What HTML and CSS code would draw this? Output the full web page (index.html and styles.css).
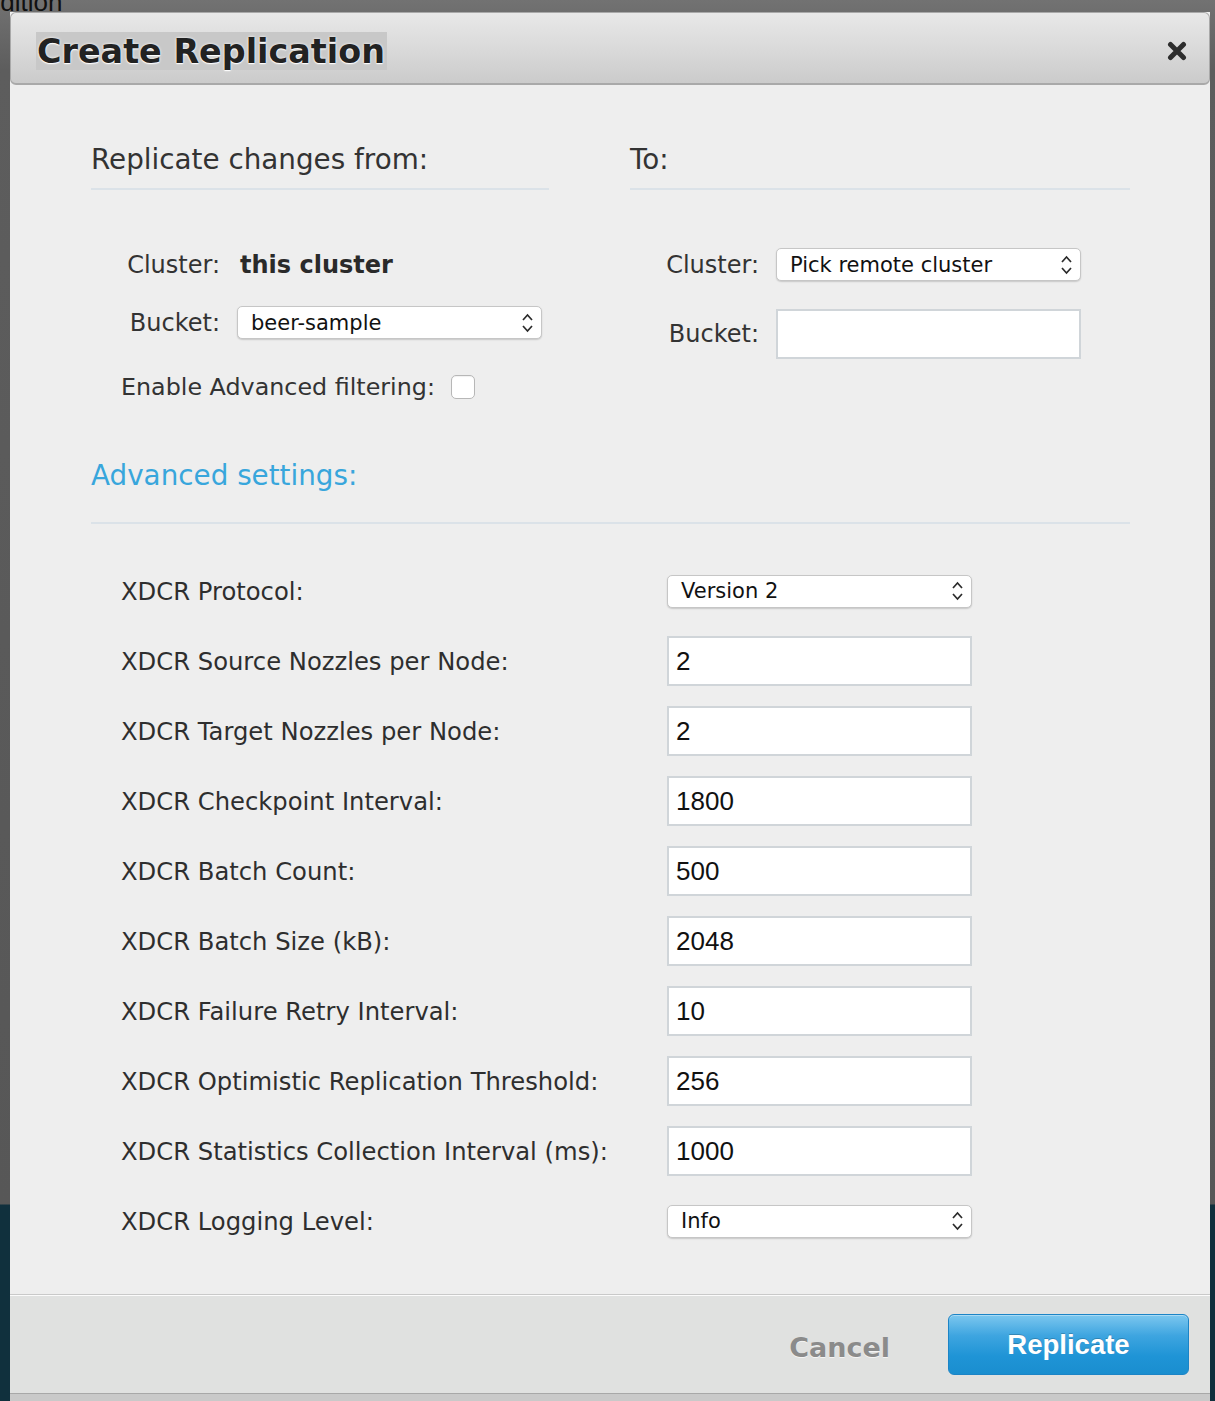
FILE: index.html
```html
<!DOCTYPE html>
<html lang="en">
<head>
<meta charset="utf-8">
<title>Create Replication</title>
<link rel="stylesheet" href="styles.css">
</head>
<body>
<div class="backdrop">
  <div class="bg-text">Edition</div>
  <div class="modal">
    <div class="modal-header">
      <h2 class="title">Create Replication</h2>
      <svg class="close" width="20" height="20" viewBox="0 0 20 20" aria-label="Close">
        <path d="M3.5 3.5 L16.5 16.5 M16.5 3.5 L3.5 16.5" stroke="#2d2d2d" stroke-width="5" stroke-linecap="round"/>
      </svg>
    </div>
    <div class="modal-body">
      <div class="columns">
        <section class="col">
          <h3 class="section-head">Replicate changes from:</h3>
          <div class="field first">
            <span class="lbl">Cluster:</span>
            <strong class="value">this cluster</strong>
          </div>
          <div class="field second-sel">
            <span class="lbl">Bucket:</span>
            <div class="select">
              <span>beer-sample</span>
              <svg class="arrows" width="13" height="24" viewBox="0 0 13 24"><path d="M2 9 L6.5 4 L11 9 M2 15 L6.5 20 L11 15" fill="none" stroke="#2b2b2b" stroke-width="1.7"/></svg>
            </div>
          </div>
          <div class="check-row">
            <span class="check-lbl">Enable Advanced filtering:</span>
            <span class="checkbox"></span>
          </div>
        </section>
        <section class="col">
          <h3 class="section-head">To:</h3>
          <div class="field first">
            <span class="lbl">Cluster:</span>
            <div class="select">
              <span>Pick remote cluster</span>
              <svg class="arrows" width="13" height="24" viewBox="0 0 13 24"><path d="M2 9 L6.5 4 L11 9 M2 15 L6.5 20 L11 15" fill="none" stroke="#2b2b2b" stroke-width="1.7"/></svg>
            </div>
          </div>
          <div class="field second-input">
            <span class="lbl">Bucket:</span>
            <input class="text-input" type="text" value="">
          </div>
        </section>
      </div>

      <h3 class="section-head adv-head">Advanced settings:</h3>

      <div class="adv-grid">
        <div class="adv-row">
          <span class="adv-lbl">XDCR Protocol:</span>
          <div class="select adv-sel">
            <span>Version 2</span>
            <svg class="arrows" width="13" height="24" viewBox="0 0 13 24"><path d="M2 9 L6.5 4 L11 9 M2 15 L6.5 20 L11 15" fill="none" stroke="#2b2b2b" stroke-width="1.7"/></svg>
          </div>
        </div>
        <div class="adv-row">
          <span class="adv-lbl">XDCR Source Nozzles per Node:</span>
          <input class="text-input adv-input" type="text" value="2">
        </div>
        <div class="adv-row">
          <span class="adv-lbl">XDCR Target Nozzles per Node:</span>
          <input class="text-input adv-input" type="text" value="2">
        </div>
        <div class="adv-row">
          <span class="adv-lbl">XDCR Checkpoint Interval:</span>
          <input class="text-input adv-input" type="text" value="1800">
        </div>
        <div class="adv-row">
          <span class="adv-lbl">XDCR Batch Count:</span>
          <input class="text-input adv-input" type="text" value="500">
        </div>
        <div class="adv-row">
          <span class="adv-lbl">XDCR Batch Size (kB):</span>
          <input class="text-input adv-input" type="text" value="2048">
        </div>
        <div class="adv-row">
          <span class="adv-lbl">XDCR Failure Retry Interval:</span>
          <input class="text-input adv-input" type="text" value="10">
        </div>
        <div class="adv-row">
          <span class="adv-lbl">XDCR Optimistic Replication Threshold:</span>
          <input class="text-input adv-input" type="text" value="256">
        </div>
        <div class="adv-row">
          <span class="adv-lbl">XDCR Statistics Collection Interval (ms):</span>
          <input class="text-input adv-input" type="text" value="1000">
        </div>
        <div class="adv-row">
          <span class="adv-lbl">XDCR Logging Level:</span>
          <div class="select adv-sel">
            <span>Info</span>
            <svg class="arrows" width="13" height="24" viewBox="0 0 13 24"><path d="M2 9 L6.5 4 L11 9 M2 15 L6.5 20 L11 15" fill="none" stroke="#2b2b2b" stroke-width="1.7"/></svg>
          </div>
        </div>
      </div>
    </div>
    <div class="modal-footer">
      <button class="btn-cancel" type="button">Cancel</button>
      <button class="btn-replicate" type="button">Replicate</button>
    </div>
  </div>
  <div class="under"></div>
</div>
</body>
</html>
```

FILE: styles.css
```css
html, body {
  margin: 0;
  padding: 0;
}

body {
  width: 1215px;
  height: 1401px;
  overflow: hidden;
  font-family: "DejaVu Sans", Verdana, sans-serif;
  color: #333;
  background: linear-gradient(180deg, #727272 0, #5d5d5d 70px, #575757 1204px, #10303d 1205px, #10303d 100%);
}

.backdrop {
  height: 1401px;
}

.bg-text {
  height: 12px;
  overflow: hidden;
  font-family: "Liberation Sans", Arial, sans-serif;
  font-size: 26px;
  line-height: 4px;
  color: #111;
  text-indent: -17px;
  white-space: nowrap;
}

.modal {
  margin-left: 10px;
  width: 1200px;
  background: #eeeeee;
}

.modal-header {
  box-sizing: border-box;
  height: 73px;
  display: flex;
  justify-content: space-between;
  align-items: flex-start;
  padding: 19px 22px 0 25px;
  border: 1px solid #a9a9a9;
  border-bottom-width: 2px;
  border-radius: 6px;
  background: linear-gradient(180deg, #e8e8e8 0%, #dadada 50%, #cbcbcb 100%);
}

.title {
  margin: 0;
  display: inline-block;
  height: 38px;
  line-height: 40px;
  padding: 0 2px 0 1px;
  font-size: 33.4px;
  font-weight: bold;
  color: #222;
  background: #c8c8c8;
  text-shadow: 0 0 3px #fff, 0 1px 1px #fff;
}

.close {
  margin-top: 9px;
  filter: blur(0.3px);
}

.modal-body {
  padding: 58px 80px 38px 81px;
}

.section-head {
  margin: 0;
  font-size: 27.8px;
  font-weight: normal;
  line-height: 34px;
  padding-bottom: 11px;
  border-bottom: 2px solid #dbe2e8;
  color: #333;
}

.columns {
  display: grid;
  grid-template-columns: 458px 500px;
  column-gap: 81px;
  align-items: start;
}

.col {
  display: flex;
  flex-direction: column;
}

.field {
  display: flex;
  align-items: center;
  height: 33px;
}

.field.first {
  margin-top: 58px;
}

.field.second-sel {
  margin-top: 25px;
}

.field.second-input {
  margin-top: 28px;
  height: 50px;
}

.lbl {
  width: 129px;
  margin-right: 17px;
  text-align: right;
  font-size: 24px;
  color: #333;
}

.value {
  font-size: 24px;
  font-weight: bold;
  color: #2a2a2a;
  padding-left: 3px;
}

.select {
  box-sizing: border-box;
  width: 305px;
  height: 33px;
  display: flex;
  align-items: center;
  justify-content: space-between;
  padding: 0 7px 0 13px;
  background: #fff;
  border: 1px solid #c6c6c6;
  border-radius: 5px;
  box-shadow: 0 1px 1.5px rgba(0, 0, 0, 0.16);
  font-size: 21px;
  color: #111;
}

.arrows {
  flex: none;
}

.text-input {
  box-sizing: border-box;
  width: 305px;
  height: 50px;
  margin: 0;
  padding: 0 7px;
  border: 2px solid #d0d5d9;
  border-radius: 0;
  background: #fff;
  font-family: "Liberation Sans", Arial, sans-serif;
  font-size: 26px;
  color: #111;
  outline: none;
}

.check-row {
  display: flex;
  align-items: center;
  height: 24px;
  margin-top: 36px;
  padding-left: 30px;
}

.check-lbl {
  font-size: 23.8px;
  color: #333;
}

.checkbox {
  box-sizing: border-box;
  width: 24px;
  height: 24px;
  margin-left: 16px;
  background: #fff;
  border: 1px solid #b7b7b7;
  border-radius: 5px;
  box-shadow: inset 0 1px 1px rgba(0, 0, 0, 0.06);
}

.adv-head {
  margin-top: 60px;
  padding-bottom: 29px;
  color: #38a6dc;
}

.adv-grid {
  margin-top: 32px;
  padding-left: 30px;
  display: flex;
  flex-direction: column;
}

.adv-row {
  display: grid;
  grid-template-columns: 546px 305px;
  align-items: center;
  height: 70px;
}

.adv-lbl {
  font-size: 24.25px;
  color: #2e2e2e;
}

.modal-footer {
  box-sizing: border-box;
  height: 100px;
  display: flex;
  justify-content: flex-end;
  align-items: flex-start;
  gap: 58px;
  padding: 19px 21px 0 0;
  background: #e0e1e0;
  border-top: 1px solid #c9c9c9;
  border-bottom: 1px solid #a8a8a8;
  box-shadow: inset 0 1px 0 #fbfbfb;
}

.btn-cancel {
  margin-top: 17px;
  padding: 0;
  border: none;
  background: none;
  font-family: "DejaVu Sans", Verdana, sans-serif;
  font-size: 27px;
  font-weight: bold;
  line-height: 34px;
  color: #8b8b8b;
  text-shadow: 0 1px 0 #f4f4f4;
}

.btn-replicate {
  box-sizing: border-box;
  width: 241px;
  height: 61px;
  padding: 0;
  border: 1px solid #1c84c6;
  border-radius: 6px;
  background: linear-gradient(180deg, #7cc7ef 0%, #3ea5e0 35%, #1f94d6 70%, #1a8ecf 100%);
  box-shadow: inset 0 1px 0 rgba(255, 255, 255, 0.35);
  font-family: "Liberation Sans", Arial, sans-serif;
  font-size: 27.5px;
  font-weight: bold;
  line-height: 56px;
  color: #fff;
  text-shadow: 0 -1px 0 rgba(0, 0, 0, 0.2);
}

.under {
  margin-left: 10px;
  width: 1200px;
  height: 8px;
  background: #c9c9c9;
}
```
